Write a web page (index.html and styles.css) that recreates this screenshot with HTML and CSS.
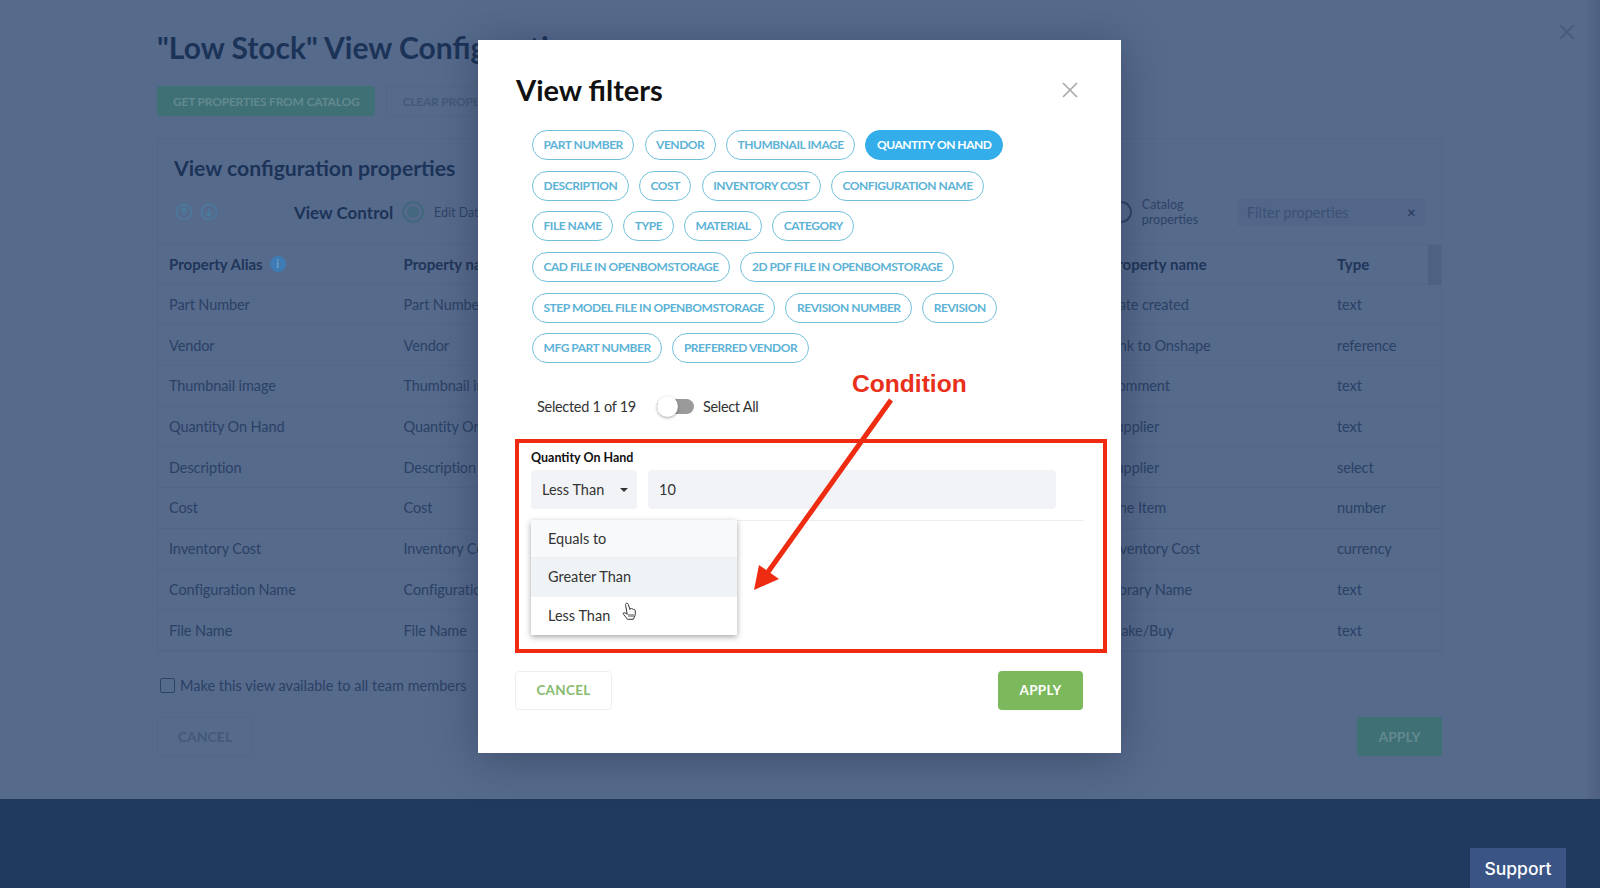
FILE: index.html
```html
<!DOCTYPE html>
<html lang="en">
<head>
    <meta charset="UTF-8">
    <meta name="viewport" content="width=device-width, initial-scale=1.0">
    <title>View filters</title>
    <link rel="stylesheet" href="styles.css">
</head>
<body>
    <div class="page">
        <h1>"Low Stock" View Configuration</h1>
        <div class="top-buttons">
            <button class="btn btn-green">GET PROPERTIES FROM CATALOG</button>
            <button class="btn btn-plain">CLEAR PROPERTIES</button>
        </div>

        <div class="card">
            <h2>View configuration properties</h2>
            <div class="controls">
                <div class="arrows">
                    <svg width="18" height="18" viewBox="0 0 18 18"><circle cx="9" cy="9" r="7.5"/><path d="M9 13V5M5.5 8.5 9 5l3.5 3.5"/></svg>
                    <svg width="18" height="18" viewBox="0 0 18 18"><circle cx="9" cy="9" r="7.5"/><path d="M9 5v8M5.5 9.5 9 13l3.5-3.5"/></svg>
                </div>
                <span class="view-control">View Control</span>
                <span class="radio radio-on"></span>
                <span class="radio-label">Edit Data</span>
                <span class="radio radio-off"></span>
                <span class="radio-label catalog">Catalog<br>properties</span>
                <div class="filter-box">
                    <span>Filter properties</span>
                    <span class="filter-x">&times;</span>
                </div>
            </div>
            <div class="row head">
                <div class="alias-head">Property Alias <span class="info">i</span></div>
                <div>Property name</div>
                <div></div>
                <div>Property name</div>
                <div>Type</div>
                <div class="scroll-thumb"></div>
            </div>
            <div class="row"><div>Part Number</div><div>Part Number</div><div></div><div>Date created</div><div>text</div></div>
            <div class="row"><div>Vendor</div><div>Vendor</div><div></div><div>Link to Onshape</div><div>reference</div></div>
            <div class="row"><div>Thumbnail image</div><div>Thumbnail image</div><div></div><div>Comment</div><div>text</div></div>
            <div class="row"><div>Quantity On Hand</div><div>Quantity On Hand</div><div></div><div>Supplier</div><div>text</div></div>
            <div class="row"><div>Description</div><div>Description</div><div></div><div>Supplier</div><div>select</div></div>
            <div class="row"><div>Cost</div><div>Cost</div><div></div><div>Line Item</div><div>number</div></div>
            <div class="row"><div>Inventory Cost</div><div>Inventory Cost</div><div></div><div>Inventory Cost</div><div>currency</div></div>
            <div class="row"><div>Configuration Name</div><div>Configuration Name</div><div></div><div>Library Name</div><div>text</div></div>
            <div class="row"><div>File Name</div><div>File Name</div><div></div><div>Make/Buy</div><div>text</div></div>
        </div>

        <label class="share"><span class="checkbox"></span>Make this view available to all team members</label>
        <div class="bottom-buttons">
            <button class="btn btn-plain btn-tall">CANCEL</button>
            <button class="btn btn-green btn-tall btn-apply">APPLY</button>
        </div>
    </div>

    <div class="footer">
        <div class="support">Support</div>
    </div>

    <svg class="page-close" width="16" height="16" viewBox="0 0 16 16"><path d="M1 1l14 14M15 1 1 15"/></svg>

    <!-- The Modal -->
    <div class="modal">
        <div class="modal-title">
            <h3>View filters</h3>
            <svg class="modal-close" width="16" height="16" viewBox="0 0 16 16"><path d="M1 1l14 14M15 1 1 15"/></svg>
        </div>
        <div class="chips">
            <div class="chip-row">
                <span class="chip">PART NUMBER</span>
                <span class="chip">VENDOR</span>
                <span class="chip">THUMBNAIL IMAGE</span>
                <span class="chip chip-on">QUANTITY ON HAND</span>
            </div>
            <div class="chip-row">
                <span class="chip">DESCRIPTION</span>
                <span class="chip">COST</span>
                <span class="chip">INVENTORY COST</span>
                <span class="chip">CONFIGURATION NAME</span>
            </div>
            <div class="chip-row">
                <span class="chip">FILE NAME</span>
                <span class="chip">TYPE</span>
                <span class="chip">MATERIAL</span>
                <span class="chip">CATEGORY</span>
            </div>
            <div class="chip-row">
                <span class="chip">CAD FILE IN OPENBOMSTORAGE</span>
                <span class="chip">2D PDF FILE IN OPENBOMSTORAGE</span>
            </div>
            <div class="chip-row">
                <span class="chip">STEP MODEL FILE IN OPENBOMSTORAGE</span>
                <span class="chip">REVISION NUMBER</span>
                <span class="chip">REVISION</span>
            </div>
            <div class="chip-row">
                <span class="chip">MFG PART NUMBER</span>
                <span class="chip">PREFERRED VENDOR</span>
            </div>
        </div>
        <div class="select-row">
            <span>Selected 1 of 19</span>
            <span class="toggle"><span class="knob"></span></span>
            <span>Select All</span>
        </div>
        <div class="condition">
            <div class="cond-label">Quantity On Hand</div>
            <div class="cond-fields">
                <div class="cond-select">Less Than<span class="caret"></span></div>
                <div class="cond-input">10</div>
            </div>
            <div class="cond-line"></div>
            <div class="menu">
                <div class="menu-item item-first">Equals to</div>
                <div class="menu-item item-hover">Greater Than</div>
                <div class="menu-item">Less Than</div>
            </div>
        </div>
        <div class="modal-buttons">
            <button class="modal-btn modal-cancel">CANCEL</button>
            <button class="modal-btn modal-apply">APPLY</button>
        </div>
    </div>

    <!-- annotation on top of the modal -->
    <div class="note">Condition</div>
    <svg class="arrow" width="1600" height="888" viewBox="0 0 1600 888">
        <path d="M891 400 768 572" stroke="#ee2c12" stroke-width="5" fill="none"/>
        <path d="M754 590 759 565 779 579z" fill="#ee2c12"/>
    </svg>
    <svg class="cursor" width="16" height="20" viewBox="0 0 16 20">
        <path d="M4 1.5c1-.8 2 0 2.3 1L8 7.5l.3-.8c.7-.6 1.4-.3 1.7.4.6-.5 1.4-.2 1.6.5.7-.3 1.4 0 1.6.8.4 1.800.2 4-.3 5.500-.5 1.400-1.200 2.600-1.600 3.400H5.500C4.500 16 2.800 14 1.500 12.300c-.8-1 .2-2.200 1.300-1.500l2.400 1.500L3.600 3.500C3.400 2.700 3.500 2 4 1.500z" fill="#fff" stroke="#333" stroke-width="1"/>
        <path d="M7 12v3M9 12v3M11 12v3" stroke="#333" stroke-width=".9" fill="none"/>
    </svg>
</body>
</html>
```
FILE: styles.css
```css
* {
    box-sizing: border-box;
}
html, body {
    margin: 0;
    height: 888px;
    overflow: hidden;
}
body {
    font-family: "Lato", "Liberation Sans", sans-serif;
    background-color: #566a8c;
    color: #1f3559;
    position: relative;
}
button {
    font-family: inherit;
}

/* Dimmed page behind the modal */
.page {
    height: 799px;
    padding: 29px 158px 0 157px;
    background: linear-gradient(to right, #566a8c 1585px, #4e6080 1600px);
}
h1 {
    margin: 0 0 20px;
    font-size: 30px;
    line-height: 37px;
    font-weight: 700;
    color: #1c3358;
}
.top-buttons {
    display: flex;
    gap: 11px;
    height: 30px;
    margin-bottom: 22px;
}
.btn {
    border: 1px solid #526687;
    border-radius: 3px;
    font-size: 12px;
    font-weight: 700;
    letter-spacing: -0.2px;
    padding: 0 15px;
    background: transparent;
    color: #44597a;
}
.btn-green {
    background-color: #3f7076;
    border-color: #3f7076;
    color: #62898f;
}
.btn-tall {
    height: 39px;
    font-size: 14px;
    letter-spacing: 0;
    width: 96px;
    padding: 0;
}
.card {
    border: 1px solid #52668a;
    height: 514px;
}
.card h2 {
    margin: 15px 0 0 16px;
    font-size: 21.200px;
    line-height: 28px;
    font-weight: 700;
    color: #1c3358;
}
.controls {
    display: flex;
    align-items: center;
    height: 44px;
    margin-top: 8px;
    padding-left: 17px;
}
.arrows {
    display: flex;
    gap: 7px;
    width: 119px;
}
.arrows svg {
    fill: none;
    stroke: #4a7ba0;
    stroke-width: 1.5;
}
.view-control {
    font-size: 17px;
    font-weight: 700;
    width: 108px;
    color: #1c3358;
}
.radio {
    width: 22px;
    height: 22px;
    border-radius: 50%;
    border: 2px solid #43687e;
    display: inline-block;
}
.radio-on {
    background-color: #43687e;
    box-shadow: inset 0 0 0 3px #566a8c;
}
.radio-label {
    font-size: 12.500px;
    margin-left: 10px;
    line-height: 15px;
    color: #2e4467;
}
.radio-off {
    margin-left: 625px;
    border-color: #2e4467;
}
.catalog {
    width: 95px;
}
.filter-box {
    display: flex;
    justify-content: space-between;
    align-items: center;
    width: 189px;
    height: 27px;
    padding: 0 10px;
    background-color: #52668a;
    border-radius: 3px;
    color: #3c5173;
    font-size: 14.500px;
}
.filter-x {
    color: #1f3559;
    font-size: 15px;
}
.row {
    display: grid;
    grid-template-columns: 234.500px 234.500px 470px 229px 1fr;
    align-items: center;
    height: 40.700px;
    padding-left: 11px;
    border-bottom: 1px solid #52668a;
    font-size: 14.500px;
    letter-spacing: -0.1px;
    color: #2b4165;
    position: relative;
}
.head {
    margin-top: 10px;
    border-top: 1px solid #52668a;
    font-size: 15px;
    letter-spacing: 0;
    font-weight: 700;
    color: #1f3559;
}
.alias-head {
    display: flex;
    align-items: center;
    gap: 7px;
}
.info {
    width: 16px;
    height: 16px;
    border-radius: 50%;
    background-color: #3e7bb5;
    color: #6f9fcb;
    font-size: 11px;
    text-align: center;
    line-height: 16px;
}
.scroll-thumb {
    position: absolute;
    right: 0;
    top: 0;
    width: 13px;
    height: 40px;
    background-color: #4e6182;
}
.share {
    display: flex;
    align-items: center;
    gap: 5px;
    margin: 25px 0 0 3px;
    font-size: 14.500px;
    color: #2b4165;
}
.checkbox {
    width: 15px;
    height: 15px;
    border: 1px solid #2e4467;
    border-radius: 2px;
}
.bottom-buttons {
    display: flex;
    justify-content: space-between;
    margin-top: 23px;
}
.btn-apply {
    width: 85px;
}
.btn-plain {
    color: #44597a;
}

/* Footer */
.footer {
    height: 89px;
    background-color: #203a5f;
    display: flex;
    justify-content: flex-end;
    align-items: flex-end;
    padding-right: 34px;
}
.support {
    width: 96px;
    height: 40px;
    background-color: #3a5585;
    color: #fff;
    font-family: "Inter", sans-serif;
    font-size: 17.500px;
    font-weight: 500;
    line-height: 41px;
    text-align: center;
}
.page-close {
    position: absolute;
    left: 1559px;
    top: 24px;
}
.page-close path {
    stroke: #43577a;
    stroke-width: 1.5;
    fill: none;
}

/* Modal */
.modal {
    position: absolute;
    left: 478px;
    top: 40px;
    width: 643px;
    height: 713px;
    padding: 0 37px;
    background-color: #fff;
    box-shadow: 0 6px 40px rgba(20, 30, 50, 0.35);
}
.modal-title {
    display: flex;
    justify-content: space-between;
    align-items: center;
    height: 90px;
    padding: 8px 6px 0 1px;
}
h3 {
    margin: 0;
    font-size: 29px;
    font-weight: 700;
    color: #111;
}
.modal-close {
    margin-top: 2px;
}
.modal-close path {
    stroke: #a8a8a8;
    stroke-width: 1.6;
    fill: none;
}
.chips {
    display: flex;
    flex-direction: column;
    gap: 10.700px;
    padding-left: 17px;
}
.chip-row {
    display: flex;
    gap: 10.200px;
}
.chip {
    height: 30px;
    padding: 0 10.500px;
    border: 1px solid #74c0dc;
    border-radius: 15px;
    font-size: 12px;
    font-weight: 700;
    letter-spacing: -0.46px;
    line-height: 28px;
    color: #5cb3d6;
}
.chip-on {
    background-color: #34aeea;
    border-color: #34aeea;
    color: #fff;
}
.select-row {
    display: flex;
    align-items: center;
    height: 30px;
    margin-top: 28px;
    padding-left: 22px;
    font-size: 14.500px;
    letter-spacing: -0.3px;
    color: #333;
}
.toggle {
    width: 37px;
    height: 15px;
    margin: 0 9px 0 21px;
    background-color: #9a9a9a;
    border-radius: 8px;
    position: relative;
}
.knob {
    position: absolute;
    left: 0;
    top: -3px;
    width: 21px;
    height: 21px;
    background-color: #fff;
    border-radius: 50%;
    box-shadow: 0 1px 3px rgba(0, 0, 0, 0.35);
}
.condition {
    position: relative;
    height: 214px;
    margin: 17.500px -23px 0 0;
    padding: 7px 13px 0 12px;
    border: 4px solid #f02a10;
}
.cond-label {
    font-size: 12.500px;
    font-weight: 700;
    line-height: 16px;
    color: #111;
}
.cond-fields {
    display: flex;
    gap: 11px;
    margin-top: 4px;
}
.cond-select, .cond-input {
    height: 39px;
    background-color: #f1f3f6;
    border-radius: 4px;
    font-size: 14.500px;
    line-height: 39px;
    color: #333;
    padding-left: 11px;
}
.cond-select {
    width: 106px;
    position: relative;
}
.caret {
    position: absolute;
    right: 9px;
    top: 18px;
    border: 4px solid transparent;
    border-top-color: #333;
    border-bottom: 0;
}
.cond-input {
    width: 408px;
}
.cond-line {
    height: 1px;
    width: 553px;
    margin-top: 11px;
    background-color: #eceff2;
}
.menu {
    position: absolute;
    left: 12px;
    top: 77px;
    width: 206px;
    background-color: #fff;
    box-shadow: 0 2px 6px rgba(0, 0, 0, 0.35);
}
.menu-item {
    height: 38.500px;
    padding-left: 17px;
    font-size: 14.500px;
    line-height: 38px;
    color: #333;
}
.item-first {
    background-color: #f8f9fa;
    border-bottom: 1px solid #edeff2;
}
.item-hover {
    background-color: #f0f3f6;
}
.modal-buttons {
    display: flex;
    justify-content: space-between;
    margin-top: 18px;
    padding-right: 1px;
}
.modal-btn {
    height: 39px;
    border-radius: 4px;
    font-size: 13.500px;
    font-weight: 700;
    letter-spacing: 0.3px;
}
.modal-cancel {
    width: 97px;
    background-color: #fff;
    border: 1px solid #eceff2;
    color: #86bb6e;
}
.modal-apply {
    width: 85px;
    background-color: #7cb85c;
    border: 0;
    color: #fff;
}

/* Annotation */
.note {
    position: absolute;
    left: 852px;
    top: 370px;
    font-family: "Liberation Sans", Arial, sans-serif;
    font-size: 24.600px;
    font-weight: 700;
    color: #e8301a;
}
.arrow {
    position: absolute;
    left: 0;
    top: 0;
    pointer-events: none;
}
.cursor {
    position: absolute;
    left: 622px;
    top: 602px;
}
```
